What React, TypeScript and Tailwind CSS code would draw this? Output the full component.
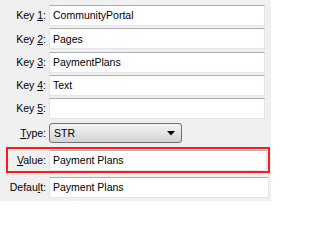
import React from 'react';

const font = { fontFamily: '"Liberation Sans", Arial, sans-serif' };

function Field({ value, className = '' }: { value: string; className?: string }) {
  return (
    <div
      className={`flex items-center h-[21px] bg-white border border-[#e3e5ea] border-t-[#abadb3] pl-[3px] text-black ${className}`}
    >
      {value}
    </div>
  );
}

function Label({ children, className = 'w-[46px]' }: { children: React.ReactNode; className?: string }) {
  return <div className={`shrink-0 text-right text-black ${className}`}>{children}</div>;
}

const keys = [
  { n: '1', value: 'CommunityPortal' },
  { n: '2', value: 'Pages' },
  { n: '3', value: 'PaymentPlans' },
  { n: '4', value: 'Text' },
  { n: '5', value: '' },
];

export default function App() {
  return (
    <div
      className="w-[271px] h-[201px] bg-[#f0f0f0] overflow-hidden pt-[5px] text-[10.5px] leading-none"
      style={font}
    >
      <div className="flex flex-col gap-[2.25px]">
        {keys.map((k) => (
          <div key={k.n} className="flex items-center">
            <Label>
              Key <span className="underline underline-offset-[1px]">{k.n}</span>:
            </Label>
            <Field value={k.value} className="ml-[3px] w-[216px]" />
          </div>
        ))}
      </div>

      <div className="flex items-center mt-[4px]">
        <Label>
          <span className="underline underline-offset-[1px]">T</span>ype:
        </Label>
        <div className="ml-[3px] w-[133px] h-[20px] rounded-[3px] border border-[#707070] bg-gradient-to-b from-[#f4f4f4] to-[#d4d4d4] flex items-center justify-between pl-[4px] pr-[6px] text-black">
          <span>STR</span>
          <svg width="8" height="5" viewBox="0 0 8 5">
            <path d="M0 0H8L4 4.5Z" fill="#000" />
          </svg>
        </div>
      </div>

      <div className="flex items-center ml-[6px] mr-[1px] mt-[4px] h-[26px] border-2 border-[#ff1a1a]">
        <Label className="w-[38px]">
          <span className="underline underline-offset-[1px]">V</span>alue:
        </Label>
        <Field value="Payment Plans" className="ml-[3px] mr-[1px] flex-1 h-[20px]" />
      </div>

      <div className="flex items-center mt-[4px]">
        <Label>
          Defau<span className="underline underline-offset-[1px]">l</span>t:
        </Label>
        <Field value="Payment Plans" className="ml-[3px] w-[220px]" />
      </div>
    </div>
  );
}
